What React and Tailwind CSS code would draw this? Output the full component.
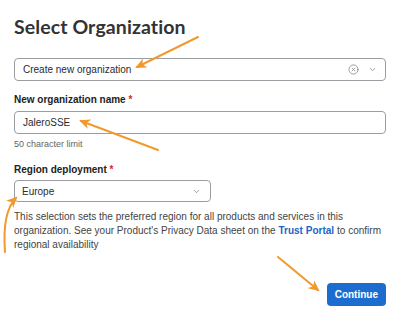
import { ChevronDown, CircleX } from 'lucide-react';

function Arrows() {
  // orange annotation arrows drawn over the form
  return (
    <svg className="absolute inset-0 pointer-events-none" width="400" height="322" viewBox="0 0 400 322">
      <defs>
        <marker id="head" markerUnits="userSpaceOnUse" markerWidth="12" markerHeight="10" refX="9" refY="5" orient="auto">
          <path d="M0,0 L11,5 L0,10 L3,5 Z" fill="#f2992e" />
        </marker>
      </defs>
      <g stroke="#f2992e" strokeWidth="2" fill="none" strokeLinecap="round">
        <line x1="198" y1="37" x2="137" y2="67" markerEnd="url(#head)" />
        <line x1="158" y1="150" x2="81" y2="121" markerEnd="url(#head)" />
        <path d="M5,252 Q2,212 16,198" markerEnd="url(#head)" />
        <line x1="278" y1="257" x2="318" y2="290" markerEnd="url(#head)" />
      </g>
    </svg>
  );
}

export default function App() {
  return (
    <div className="relative w-[400px] h-[322px] bg-white overflow-hidden font-['Liberation_Sans',Arial,sans-serif] text-[#2b2b2b]">
      <div className="flex flex-col px-[14px] pt-[13px]">
        <h1 className="font-['Lato',sans-serif] font-bold text-[19.5px] leading-[28px] tracking-[0.1px] text-[#333]">Select Organization</h1>

        {/* organization select */}
        <div className="mt-[17px] flex items-center h-[23px] w-[372px] border border-[#9a9ea3] rounded-[4px] pl-[8px] pr-[8px] text-[10px]">
          <span className="flex-1">Create new organization</span>
          <CircleX className="w-[11px] h-[11px] text-[#8a8a8a]" strokeWidth={1.8} />
          <ChevronDown className="ml-[9px] w-[9px] h-[9px] text-[#8a8a8a]" strokeWidth={2.2} />
        </div>

        <label className="mt-[12px] text-[10px] leading-[14px] font-bold text-[#222]">
          New organization name <span className="text-[#d0243a]">*</span>
        </label>
        <div className="mt-[4px] flex items-center h-[23px] w-[372px] border border-[#9a9ea3] rounded-[4px] px-[8px] text-[10px]">
          JaleroSSE
        </div>
        <div className="mt-[4px] text-[9px] leading-[12px] text-[#666]">50 character limit</div>

        <label className="mt-[13px] text-[10px] leading-[14px] font-bold text-[#222]">
          Region deployment <span className="text-[#d0243a]">*</span>
        </label>
        <div className="mt-[3px] flex items-center h-[22px] w-[197px] border border-[#9a9ea3] rounded-[4px] pl-[7px] pr-[9px] text-[10px]">
          <span className="flex-1">Europe</span>
          <ChevronDown className="w-[9px] h-[9px] text-[#8a8a8a]" strokeWidth={2.2} />
        </div>

        <p className="mt-[8px] text-[10px] leading-[14px] text-[#444] w-[378px]">
          This selection sets the preferred region for all products and services in this
          <br />
          organization. See your Product's Privacy Data sheet on the
          <span className="mx-[3px] font-bold text-[#1a66c4]">Trust Portal</span>
          to confirm
          <br />
          regional availability
        </p>

        <div className="mt-[31px] flex justify-end">
          <button className="h-[23px] px-[8px] rounded-[4px] bg-[#1d6dd0] text-white text-[10px] font-bold">
            Continue
          </button>
        </div>
      </div>
      <Arrows />
    </div>
  );
}
